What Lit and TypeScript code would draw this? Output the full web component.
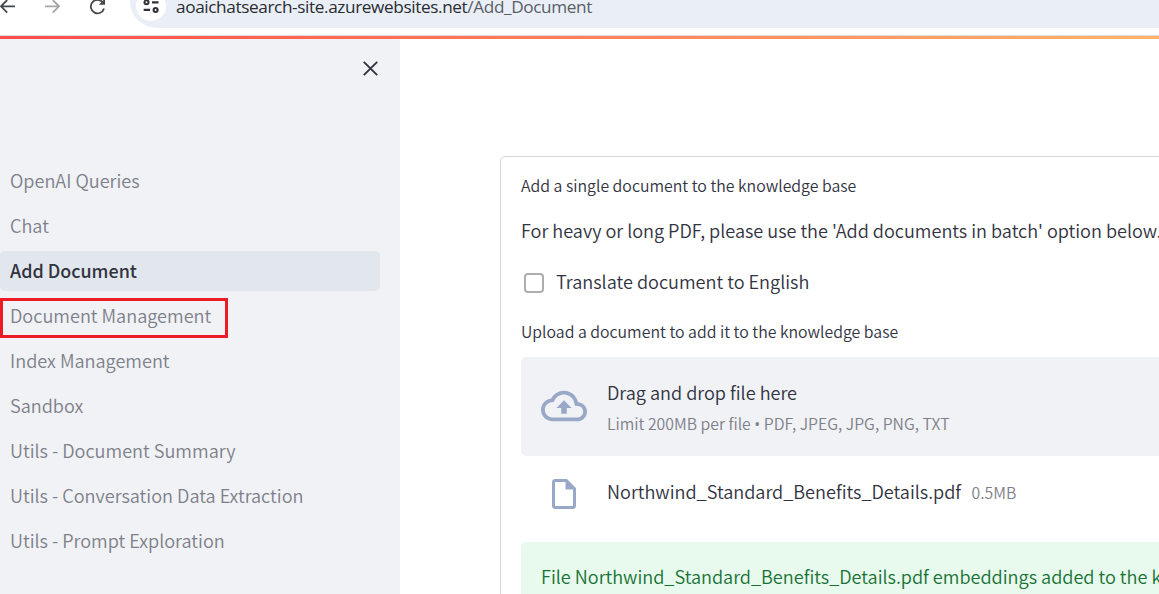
import { LitElement, html, css } from "lit";
import { customElement, state } from "lit/decorators.js";
import { classMap } from "lit/directives/class-map.js";

const PAGES = [
  "OpenAI Queries",
  "Chat",
  "Add Document",
  "Document Management",
  "Index Management",
  "Sandbox",
  "Utils - Document Summary",
  "Utils - Conversation Data Extraction",
  "Utils - Prompt Exploration",
];

@customElement("browser-bar")
class BrowserBar extends LitElement {
  static styles = css`
    :host {
      display: flex;
      height: 35px;
      background: #fff;
      border-bottom: 1px solid #dadfe3;
      overflow: hidden;
    }
    .tools {
      flex: none;
      width: 130px;
      height: 28px;
      display: block;
    }
    .address {
      flex: 1;
      height: 28px;
      display: flex;
      background: #e9eef7;
      border-bottom-left-radius: 28px 26px;
    }
    .site {
      flex: none;
      width: 46px;
      height: 28px;
      display: block;
    }
    .url {
      font: 400 17.2px/28px "Open Sans", sans-serif;
      letter-spacing: -0.38px;
      color: #2a2c30;
      white-space: nowrap;
      margin-top: -7px;
    }
    .path {
      color: #5a5e65;
    }
  `;
  render() {
    return html`
      <svg class="tools" viewBox="0 0 130 28" fill="none" stroke-width="1.8">
        <path d="M15 6.3H1M7.2 0 1 6.3l6.2 6.3" stroke="#45484b" />
        <path d="M45 6.3h14M52.8 0 59 6.3l-6.2 6.3" stroke="#a5a5a5" />
        <path d="M102.6 2.2A6.7 6.7 0 1 0 104 8.4" stroke="#45484b" />
        <path d="M105-1.5v6.2h-6.2z" fill="#45484b" />
      </svg>
      <div class="address">
        <svg class="site" viewBox="0 0 46 28" fill="none" stroke="#303235" stroke-width="2.1">
          <circle cx="21" cy="6" r="15" fill="#fff" stroke="none" />
          <circle cx="16.5" cy="2.3" r="2" />
          <path d="M22 2.4h6.5M13.7 9.9h6.4" />
          <circle cx="25.6" cy="10" r="2" />
        </svg>
        <div class="url">aoaichatsearch-site.azurewebsites.net<span class="path">/Add_Document</span></div>
      </div>
    `;
  }
}

@customElement("side-nav")
class SideNav extends LitElement {
  @state() private current = "Add Document";

  static styles = css`
    :host {
      box-sizing: border-box;
      display: flex;
      flex-direction: column;
      width: 400px;
      background: #f0f2f6;
      padding: 21px 20px 0 0;
    }
    .head {
      display: flex;
      justify-content: flex-end;
      height: 101px;
    }
    .close {
      width: 19px;
      height: 19px;
      display: block;
    }
    nav {
      display: flex;
      flex-direction: column;
      gap: 5px;
    }
    .item {
      box-sizing: border-box;
      height: 40px;
      padding: 0 10px;
      line-height: 39px;
      border-radius: 5px;
      color: #7e8089;
      white-space: nowrap;
    }
    .active {
      background: #e2e7ed;
      color: #31333f;
      font-size: 17.92px;
      font-weight: 500;
    }
    .marked {
      box-sizing: border-box;
      width: 228px;
      height: 40px;
      margin: 2px 0 -2px;
      padding: 0 7px;
      line-height: 29px;
      border: 3px solid #ed1c24;
      border-radius: 0;
    }
  `;
  render() {
    return html`
      <div class="head">
        <svg class="close" viewBox="0 0 19 19" fill="none" stroke="#31333f" stroke-width="1.9">
          <path d="M2.8 1.8 16.2 15.2M16.2 1.8 2.8 15.2" />
        </svg>
      </div>
      <nav>
        ${PAGES.map(
          (page) => html`<div
            class=${classMap({
              item: true,
              active: page === this.current,
              marked: page === "Document Management",
            })}
            @click=${() => (this.current = page)}
          >${page}</div>`
        )}
      </nav>
    `;
  }
}

@customElement("document-form")
class DocumentForm extends LitElement {
  static styles = css`
    :host {
      box-sizing: border-box;
      display: flex;
      flex-direction: column;
      width: 800px;
      height: 600px;
      padding: 20px;
      border: 1px solid #d6d6d9;
      border-radius: 5px;
      white-space: nowrap;
    }
    .label {
      font-size: 15.85px;
      line-height: 18px;
    }
    .note {
      margin-top: 20px;
      line-height: 30px;
      letter-spacing: -0.015px;
    }
    .check {
      display: flex;
      gap: 12px;
      margin: 23px 0 22px 3px;
      height: 30px;
    }
    .box {
      box-sizing: border-box;
      width: 20px;
      height: 20px;
      margin-top: 5px;
      border: 2px solid #adadb2;
      border-radius: 4px;
    }
    .check-text {
      line-height: 26px;
    }
    .upload {
      margin-top: 3px;
    }
    .drop {
      box-sizing: border-box;
      display: flex;
      align-items: center;
      gap: 20px;
      height: 99px;
      margin-top: 16px;
      padding: 0 20px;
      border-radius: 5px;
      background: #f0f2f6;
    }
    .cloud {
      width: 46px;
      height: 46px;
      margin-bottom: 2px;
      fill: #9aa8c7;
    }
    .title {
      line-height: 30px;
    }
    .limit {
      height: 30px;
      font-size: 15.82px;
      line-height: 34px;
      color: #7e8089;
    }
    .dot {
      font-family: "Open Sans", sans-serif;
      font-weight: 400;
      line-height: 1;
    }
    .file {
      display: flex;
      align-items: center;
      height: 36px;
      margin-top: 20px;
      padding-left: 25px;
    }
    .doc {
      width: 36px;
      height: 36px;
      margin-right: 25px;
      fill: #9aa8c7;
    }
    .name {
      line-height: 30px;
      padding-bottom: 6px;
    }
    .size {
      margin-left: 10.5px;
      padding-bottom: 3px;
      font-size: 15.85px;
      line-height: 30px;
      color: #7e8089;
    }
    .success {
      flex: 1;
      margin-top: 30px;
      padding: 19px 20px;
      border-radius: 5px;
      background: #e8f9ee;
      color: #177233;
      line-height: 30px;
    }
  `;
  render() {
    return html`
      <div class="label">Add a single document to the knowledge base</div>
      <div class="note">For heavy or long PDF, please use the 'Add documents in batch' option below.</div>
      <div class="check">
        <div class="box"></div>
        <div class="check-text">Translate document to English</div>
      </div>
      <div class="label upload">Upload a document to add it to the knowledge base</div>
      <div class="drop">
        <svg class="cloud" viewBox="0 0 24 24">
          <path fill-rule="evenodd" d="M19.35 10.04C18.67 6.59 15.64 4 12 4 9.11 4 6.6 5.64 5.35 8.04 2.34 8.36 0 10.91 0 14c0 3.31 2.69 6 6 6h13c2.76 0 5-2.24 5-5 0-2.64-2.05-4.78-4.65-4.96zM19 18H6c-2.21 0-4-1.79-4-4 0-2.05 1.53-3.76 3.56-3.97l1.07-.11.5-.95C8.08 7.14 9.94 6 12 6c2.62 0 4.88 1.86 5.39 4.43l.3 1.5 1.53.11c1.56.1 2.78 1.41 2.78 2.96 0 1.65-1.35 3-3 3zM8 13h2.55v3h2.9v-3H16l-4-4z" />
        </svg>
        <div>
          <div class="title">Drag and drop file here</div>
          <div class="limit">Limit 200MB per file <span class="dot">•</span> PDF, JPEG, JPG, PNG, TXT</div>
        </div>
      </div>
      <div class="file">
        <svg class="doc" viewBox="0 0 24 24">
          <path d="M14 2H6c-1.1 0-1.99.9-1.99 2L4 20c0 1.1.89 2 1.99 2H18c1.1 0 2-.9 2-2V8l-6-6zM6 20V4h7v5h5v11H6z" />
        </svg>
        <div class="name">Northwind_Standard_Benefits_Details.pdf</div>
        <div class="size">0.5MB</div>
      </div>
      <div class="success">File Northwind_Standard_Benefits_Details.pdf embeddings added to the knowledge base.</div>
    `;
  }
}

@customElement("app-root")
class AppRoot extends LitElement {
  static styles = css`
    :host {
      display: flex;
      flex-direction: column;
      width: 100%;
      height: 594px;
      overflow: hidden;
      background: #fff;
      color: #31333f;
      font-family: "Noto Sans CJK SC", "Noto Sans", sans-serif;
      font-size: 18.1px;
      font-weight: 350;
    }
    .stripe {
      flex: none;
      height: 3px;
      background: linear-gradient(90deg, #ff4b4b, #ffb368);
    }
    .body {
      flex: 1;
      min-height: 0;
      display: flex;
    }
    side-nav {
      flex: none;
    }
    main {
      flex: 1;
      min-width: 0;
      overflow: hidden;
      padding: 117px 0 0 100px;
    }
  `;
  render() {
    return html`
      <browser-bar></browser-bar>
      <div class="stripe"></div>
      <div class="body">
        <side-nav></side-nav>
        <main><document-form></document-form></main>
      </div>
    `;
  }
}
